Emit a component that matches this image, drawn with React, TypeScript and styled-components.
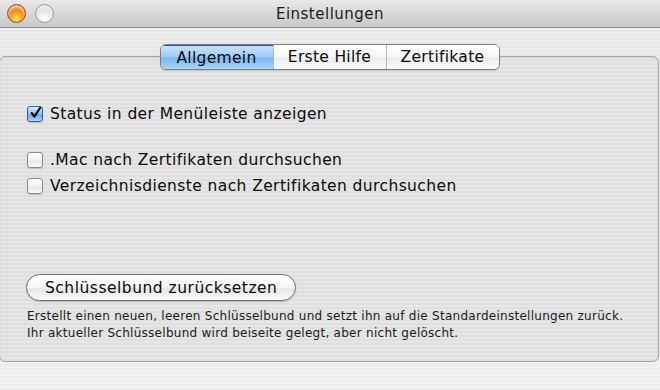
import React, { useState } from "react";
import styled, { createGlobalStyle } from "styled-components";

const GlobalStyle = createGlobalStyle`
  html, body {
    margin: 0;
    padding: 0;
    background: #ececec;
  }
  body {
    font-family: "DejaVu Sans", "Liberation Sans", sans-serif;
    color: #111;
  }
`;

const tabs = ["Allgemein", "Erste Hilfe", "Zertifikate"];

const options = [
  { label: "Status in der Menüleiste anzeigen", checked: true, gap: 0 },
  { label: ".Mac nach Zertifikaten durchsuchen", checked: false, gap: 20 },
  { label: "Verzeichnisdienste nach Zertifikaten durchsuchen", checked: false, gap: 0 },
];

const CheckMark = () => (
  <svg width="16" height="16" viewBox="0 0 16 16">
    <path
      d="M3.5 8.2 L6.6 12.4 L13.6 1.8"
      fill="none"
      stroke="#050505"
      strokeWidth="2.6"
      strokeLinecap="round"
      strokeLinejoin="round"
    />
  </svg>
);

const App: React.FC = () => {
  const [active, setActive] = useState(0);
  const [checks, setChecks] = useState(options.map((o) => o.checked));

  const toggle = (i: number) =>
    setChecks((prev) => prev.map((c, j) => (j === i ? !c : c)));

  return (
    <>
      <GlobalStyle />
      <Window>
        <TitleBar>
          <Lights>
            <Light $color="red" />
            <Light $color="gray" />
          </Lights>
          <Title>Einstellungen</Title>
        </TitleBar>
        <Body>
          <TabRow>
            <Segmented>
              {tabs.map((t, i) => (
                <Segment key={t} $active={i === active} onClick={() => setActive(i)}>
                  {t}
                </Segment>
              ))}
            </Segmented>
          </TabRow>
          <Panel>
            <Options>
              {options.map((o, i) => (
                <OptionRow key={o.label} $gap={o.gap} onClick={() => toggle(i)}>
                  <Box $checked={checks[i]}>{checks[i] && <CheckMark />}</Box>
                  <span>{o.label}</span>
                </OptionRow>
              ))}
            </Options>
            <ResetArea>
              <PillButton>Schlüsselbund zurücksetzen</PillButton>
              <Hint>
                Erstellt einen neuen, leeren Schlüsselbund und setzt ihn auf die
                Standardeinstellungen zurück.
                <br />
                Ihr aktueller Schlüsselbund wird beiseite gelegt, aber nicht gelöscht.
              </Hint>
            </ResetArea>
          </Panel>
          <Footer />
        </Body>
      </Window>
    </>
  );
};

export default App;

const stripes = (a: string, b: string) =>
  `repeating-linear-gradient(to bottom, ${a} 0px, ${a} 2px, ${b} 2px, ${b} 4px)`;

const Window = styled.div`
  width: 660px;
  height: 390px;
  display: flex;
  flex-direction: column;
  overflow: hidden;
`;

const TitleBar = styled.div`
  height: 27px;
  flex: none;
  position: relative;
  display: flex;
  align-items: center;
  justify-content: center;
  background: linear-gradient(to bottom, #e9e9e9 0%, #d6d6d6 55%, #c9c9c9 100%);
  border-bottom: 1px solid #8c8c8c;
`;

const Lights = styled.div`
  position: absolute;
  left: 7px;
  top: 4px;
  display: flex;
  gap: 9px;
`;

const Light = styled.div<{ $color: "red" | "gray" }>`
  width: 19px;
  height: 19px;
  border-radius: 50%;
  box-sizing: border-box;
  border: 1px solid ${(p) => (p.$color === "red" ? "#9c4c12" : "#9a9a9a")};
  background: ${(p) =>
    p.$color === "red"
      ? "radial-gradient(circle at 50% 82%, #ffe46a 0%, #f9a51e 35%, #e9760f 62%, #c4540a 100%)"
      : "radial-gradient(circle at 50% 80%, #ffffff 0%, #e6e6e6 50%, #bcbcbc 100%)"};
  box-shadow: inset 0 3px 3px rgba(255, 255, 255, 0.7);
`;

const Title = styled.div`
  font-size: 15px;
  letter-spacing: 0.5px;
  color: #1a1a1a;
`;

const Body = styled.div`
  flex: 1;
  display: flex;
  flex-direction: column;
  background: ${stripes("#ededed", "#e6e6e6")};
`;

const TabRow = styled.div`
  display: flex;
  justify-content: center;
  padding-top: 16px;
  margin-bottom: -14px;
  position: relative;
  z-index: 1;
  padding-right: 1px;
`;

const Segmented = styled.div`
  display: flex;
  height: 26px;
  box-sizing: border-box;
  border: 1px solid #7f7f7f;
  border-radius: 6px;
  overflow: hidden;
  box-shadow: 0 1px 1px rgba(0, 0, 0, 0.15);
  background: #fff;
`;

const Segment = styled.div<{ $active: boolean }>`
  display: flex;
  align-items: center;
  justify-content: center;
  width: 112px;
  font-size: 15.5px;
  letter-spacing: 0.3px;
  color: #0a0a0a;
  cursor: default;
  border-left: 1px solid #b5b5b5;
  background: ${(p) =>
    p.$active
      ? "linear-gradient(to bottom, #c9e2fb 0%, #9ccaf6 48%, #7ab6f2 52%, #a6d7fb 100%)"
      : "linear-gradient(to bottom, #ffffff 0%, #f7f7f7 50%, #ececec 52%, #fafafa 100%)"};
  &:first-child {
    border-left: none;
    border-top: 1px solid #2b4f9a;
  }
`;

const Panel = styled.div`
  height: 306px;
  box-sizing: border-box;
  margin: 0 1px 0 -1px;
  border: 1px solid #a6a6a6;
  border-radius: 6px;
  background: ${stripes("#e6e6e6", "#dfdfdf")};
  box-shadow: inset 0 1px 1px rgba(0, 0, 0, 0.08);
  display: flex;
  flex-direction: column;
  justify-content: space-between;
  padding: 48px 0 19px 27px;
`;

const Options = styled.div`
  display: flex;
  flex-direction: column;
  gap: 8px;
`;

const OptionRow = styled.label<{ $gap: number }>`
  display: flex;
  align-items: center;
  gap: 7px;
  font-size: 15.5px;
  letter-spacing: 0.4px;
  color: #0a0a0a;
  margin-top: ${(p) => p.$gap}px;
  cursor: default;
  height: 18px;
`;

const Box = styled.span<{ $checked: boolean }>`
  width: 16px;
  height: 16px;
  box-sizing: border-box;
  border-radius: 3px;
  border: 1px solid ${(p) => (p.$checked ? "#3a5c92" : "#8a8a8a")};
  background: ${(p) =>
    p.$checked
      ? "linear-gradient(to bottom, #d6eafd 0%, #8fc2f4 50%, #6aa9ee 55%, #a8d6fb 100%)"
      : "linear-gradient(to bottom, #ffffff 0%, #f2f2f2 50%, #e6e6e6 55%, #fbfbfb 100%)"};
  box-shadow: 0 1px 1px rgba(0, 0, 0, 0.15);
  display: flex;
  align-items: center;
  justify-content: center;
  overflow: visible;
  flex: none;

  svg {
    margin-top: -3px;
    margin-left: 1px;
  }
`;

const ResetArea = styled.div`
  display: flex;
  flex-direction: column;
  align-items: flex-start;
`;

const PillButton = styled.button`
  height: 27px;
  padding: 0 18px;
  border-radius: 14px;
  border: 1px solid #6f6f6f;
  background: linear-gradient(to bottom, #ffffff 0%, #f5f5f5 50%, #e6e6e6 55%, #fafafa 100%);
  box-shadow: 0 1px 1px rgba(0, 0, 0, 0.2);
  font-family: "DejaVu Sans", "Liberation Sans", sans-serif;
  font-size: 15.5px;
  letter-spacing: 0.5px;
  color: #0a0a0a;
  cursor: default;
  margin-left: -1px;
`;

const Hint = styled.p`
  margin: 7px 0 0 0;
  font-size: 12px;
  letter-spacing: 0.27px;
  line-height: 17px;
  color: #1a1a1a;
`;

const Footer = styled.div`
  flex: 1;
  background: ${stripes("#f2f2f2", "#ebebeb")};
`;
